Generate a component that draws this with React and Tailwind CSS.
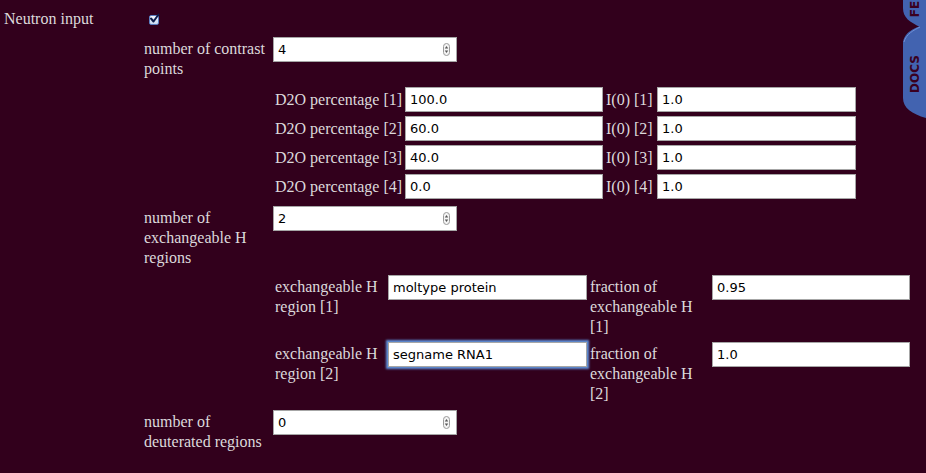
import React from "react";

const inputBase =
  "h-[25px] border border-[#a6a6a6] bg-white px-[4px] font-['DejaVu_Sans',sans-serif] text-[13px] leading-[23px] text-black outline-none";

const Spinner = () => (
  <svg
    className="absolute right-[7px] top-[6px]"
    width="7"
    height="13"
    viewBox="0 0 7 13"
  >
    <rect x="0.5" y="0.5" width="6" height="12" rx="3" fill="#f4f4f4" stroke="#9a9a9a" />
    <path d="M3.5 3 L5.2 5.4 H1.8 Z" fill="#555" />
    <path d="M3.5 10 L5.2 7.6 H1.8 Z" fill="#555" />
  </svg>
);

const NumberBox = ({ value }) => (
  <div className="relative w-[184px] shrink-0">
    <input className={`${inputBase} w-full`} defaultValue={value} readOnly />
    <Spinner />
  </div>
);

const TextBox = ({ value, w, focused }) => (
  <input
    className={`${inputBase} shrink-0 ${w} ${
      focused ? "border-[#7ea8e8] shadow-[0_0_2px_2px_#5f8fd8]" : ""
    }`}
    defaultValue={value}
    readOnly
  />
);

const NumberRow = ({ label, value, className }) => (
  <div className={`flex items-start ${className}`}>
    <div className="w-[129px] shrink-0 pr-[4px] pt-[2px]">{label}</div>
    <NumberBox value={value} />
  </div>
);

const Checkbox = () => (
  <div className="relative h-[10px] w-[10px] rounded-[2px] border border-[#5b7ec0] bg-gradient-to-b from-[#f4f8fe] to-[#c9daf2]">
    <svg
      className="absolute -right-[2px] -top-[3px]"
      width="11"
      height="11"
      viewBox="0 0 11 11"
    >
      <path
        d="M2 5.5 L4.5 8.5 L9.5 1.5"
        fill="none"
        stroke="#0e1d4a"
        strokeWidth="2"
        strokeLinecap="round"
        strokeLinejoin="round"
      />
    </svg>
  </div>
);

const SideTabs = () => (
  <svg
    className="absolute right-0 top-0"
    width="24"
    height="120"
    viewBox="0 0 24 120"
  >
    <path d="M24 0 H1 V8 C1 18 8 22 18 27 H24 Z" fill="#4263b0" />
    <path d="M24 24 C19 26 1 30 1 44 V98 C1 108 10 114 24 118 Z" fill="#4263b0" />
    <path d="M18 27 C12 30 4 34 2 42" fill="none" stroke="#6f8fd6" strokeWidth="1" />
    <text
      transform="translate(17 9) rotate(-90)"
      textAnchor="middle"
      fontSize="12"
      fontWeight="bold"
      fontFamily="DejaVu Sans, sans-serif"
      fill="#3a0020"
    >
      FE
    </text>
    <text
      transform="translate(17 74) rotate(-90)"
      textAnchor="middle"
      fontSize="12"
      fontWeight="bold"
      fontFamily="DejaVu Sans, sans-serif"
      fill="#3a0020"
    >
      DOCS
    </text>
  </svg>
);

const contrasts = [
  { d2o: "100.0", i0: "1.0" },
  { d2o: "60.0", i0: "1.0" },
  { d2o: "40.0", i0: "1.0" },
  { d2o: "0.0", i0: "1.0" },
];

const exchRegions = [
  { region: "moltype protein", frac: "0.95" },
  { region: "segname RNA1", frac: "1.0", focused: true },
];

export default function App() {
  return (
    <div className="relative min-h-screen w-full overflow-hidden bg-[#32001c] font-['Liberation_Serif',serif] text-[16px] leading-5 text-[#dcd9db]">
      <SideTabs />

      <div className="flex pt-[9px]">
        {/* left label column */}
        <div className="w-[144px] shrink-0 pl-[4px]">Neutron input</div>

        {/* options column */}
        <div className="flex flex-col">
          <div className="ml-[5px] mt-[6px]">
            <Checkbox />
          </div>

          <NumberRow className="mt-[12px]" label="number of contrast points" value="4" />

          {/* contrast points */}
          <div className="ml-[131px] mt-[8px] flex flex-col gap-[4px]">
            {contrasts.map((c, i) => (
              <div key={i} className="flex h-[25px] items-center">
                <div className="w-[130px] shrink-0 whitespace-nowrap">
                  {`D2O percentage [${i + 1}]`}
                </div>
                <TextBox value={c.d2o} w="w-[198px]" />
                <div className="w-[54px] shrink-0 whitespace-nowrap pl-[3px]">
                  {`I(0) [${i + 1}]`}
                </div>
                <TextBox value={c.i0} w="w-[199px]" />
              </div>
            ))}
          </div>

          <NumberRow
            className="mt-[7px]"
            label="number of exchangeable H regions"
            value="2"
          />

          {/* exchangeable H regions */}
          <div className="ml-[131px] mt-[7px] flex flex-col gap-[5px]">
            {exchRegions.map((r, i) => (
              <div key={i} className="flex items-start">
                <div className="w-[113px] shrink-0 pr-[4px] pt-[2px]">
                  {`exchangeable H region [${i + 1}]`}
                </div>
                <TextBox value={r.region} w="w-[199px]" focused={r.focused} />
                <div className="w-[125px] shrink-0 pl-[3px] pr-[6px] pt-[2px]">
                  {`fraction of exchangeable H [${i + 1}]`}
                </div>
                <TextBox value={r.frac} w="w-[198px]" />
              </div>
            ))}
          </div>

          <NumberRow
            className="mt-[6px]"
            label="number of deuterated regions"
            value="0"
          />
        </div>
      </div>
    </div>
  );
}
